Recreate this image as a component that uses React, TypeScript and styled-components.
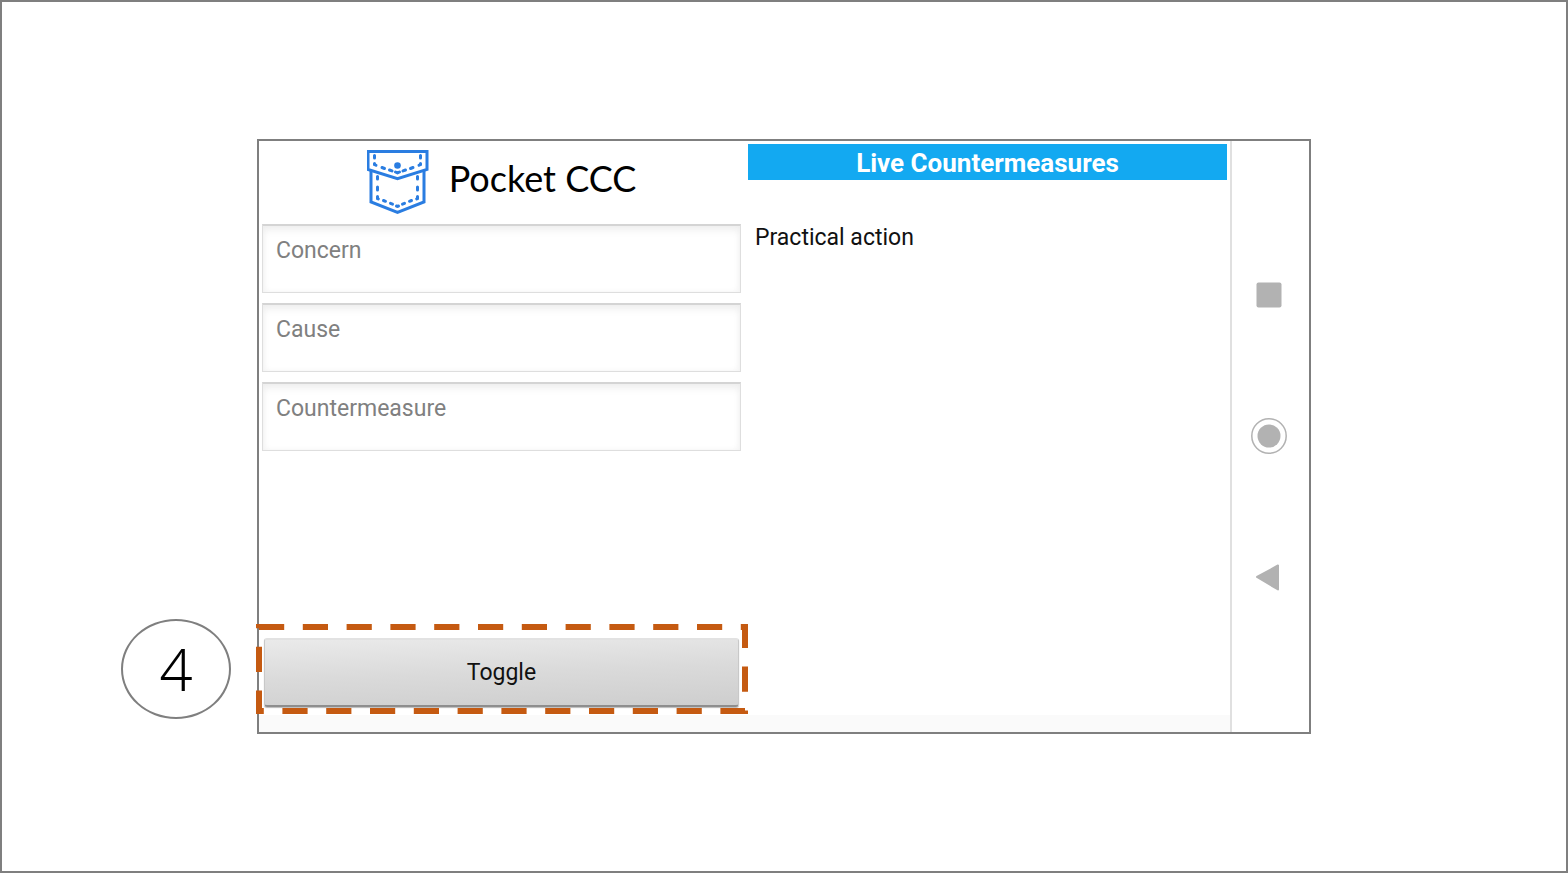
import React from 'react';
import styled, { createGlobalStyle } from 'styled-components';

const GlobalStyle = createGlobalStyle`
  * { box-sizing: border-box; }
  body { margin: 0; background: #fff; font-family: Roboto, sans-serif; }
`;

const Slide = styled.main`
  display: flex;
  align-items: center;
  justify-content: center;
  min-height: 100vh;
  padding: 24px;
  border: 2px solid #7f7f7f;
`;

const Device = styled.section`
  display: flex;
  width: 100%;
  max-width: 1054px;
  border: 2px solid #7f7f7f;
  background: #fff;
`;

const AppArea = styled.div`
  flex: 1;
  display: flex;
  flex-direction: column;
`;

const Columns = styled.div`
  display: grid;
  grid-template-columns: 1fr 1fr;
  gap: 7px;
  min-height: 574px;
  padding: 3px;
  background: #fff;
`;

const BottomStrip = styled.div`
  height: 17px;
  background: #fafafa;
`;

const Column = styled.div`
  display: flex;
  flex-direction: column;
`;

const Brand = styled.header`
  display: flex;
  align-items: center;
  justify-content: center;
  gap: 20px;
  height: 80px;
  padding-bottom: 4px;
`;

const BrandName = styled.h1`
  margin: 0;
  padding-bottom: 8px;
  font: 400 36px/44px Lato, sans-serif;
  color: #000;
`;

const Fields = styled.div`
  display: grid;
  gap: 10px;
`;

const Field = styled.textarea`
  display: block;
  width: 100%;
  height: 69px;
  padding: 11px 13px;
  border: 1px solid #dedede;
  border-top: 2px solid #d4d4d4;
  background: #fff;
  box-shadow: inset 0 5px 10px -2px #ececec, inset 0 0 6px #f4f4f4;
  font: 400 23px/28px Roboto, sans-serif;
  color: #111;
  resize: none;
  outline: none;
  overflow: hidden;
  &::placeholder { color: #808080; opacity: 1; }
`;

const ToggleSlot = styled.div`
  position: relative;
  margin-top: auto;
  padding: 0 2px 5px;
`;

const ToggleButton = styled.button`
  display: block;
  width: 100%;
  height: 69px;
  border: 1px solid #c8c8c8;
  border-top: 2px solid #e2e2e2;
  border-bottom: 2px solid #8e8e8e;
  border-radius: 3px;
  background: linear-gradient(178deg, #eaeaea, #dadada 50%, #cecece);
  box-shadow: 0 1px 1px #bbb;
  font: 400 23px/28px Roboto, sans-serif;
  color: #111;
`;

const Highlight = styled.svg`
  position: absolute;
  top: -14px;
  left: -6px;
  width: calc(100% + 13px);
  height: 90px;
  pointer-events: none;
  rect {
    width: calc(100% - 6px);
    height: calc(100% - 6px);
    fill: none;
    stroke: #c55a11;
    stroke-width: 6px;
  }
`;

const StepMarker = styled.div`
  position: absolute;
  top: -19px;
  left: -141px;
  display: flex;
  align-items: center;
  justify-content: center;
  width: 110px;
  height: 100px;
  border: 2px solid #7f7f7f;
  border-radius: 50%;
  background: #fff;
  font: 350 58px/80px 'Noto Sans', 'Open Sans', sans-serif;
  color: #000;
`;

const PanelTitle = styled.h2`
  margin: 0;
  padding: 3px 0 1px;
  background: #13a9f1;
  font: 700 26px/32px Roboto, sans-serif;
  text-align: center;
  color: #fff;
`;

const Countermeasure = styled.p`
  margin: 0;
  padding: 44px 7px;
  font: 400 23px/28px Roboto, sans-serif;
  color: #111;
`;

const NavBar = styled.nav`
  display: flex;
  flex-direction: column;
  align-items: center;
  justify-content: center;
  gap: 105px;
  width: 79px;
  padding: 0 3px 1px 0;
  border-left: 2px solid #e0e0e0;
`;

const NavButton = styled.button`
  width: 36px;
  height: 36px;
  padding: 0;
  border: 0;
  background: none;
  svg { display: block; }
`;

const PocketLogo = () => (
  <svg width="62" height="66" viewBox="0 0 62 66" fill="none" stroke="#2a7de1" strokeWidth="3" aria-hidden="true">
    <path d="M1 2.500h59v18L30.500 29.700 1 20.500z" />
    <path d="M4 21.500v31.500L30.500 63.500l26.500-10.500V21.500" />
    <g strokeLinecap="round">
      <path d="M7.500 6.500v2.500M7.500 14.500v1l1.500 .8M53.500 6.500v2.500M53.500 14.500v1l-1.500 .8" />
      <path d="M15 18.500l2.500 1M22.500 21l2.500 .9M28.500 23l2 .9 2-.9M46 18.500l-2.500 1M38.500 21l-2.500 .9" />
      <path d="M10.500 27.500v2.500M10.500 38v3M10.500 47.500v2l.8 .4M50.500 27.500v2.500M50.500 38v3M50.500 47.500v2l-.8 .4" />
      <path d="M16.500 51.500l2 .8M23.500 54.300l2 .8M29.500 57l1 .4 1-.4M44.500 51.500l-2 .8M37.500 54.300l-2 .8" />
    </g>
    <circle cx="30.500" cy="16.500" r="3.300" fill="#2a7de1" stroke="none" />
  </svg>
);

export default function App() {
  return (
    <>
      <GlobalStyle />
      <Slide>
        <Device>
          <AppArea>
            <Columns>
              <Column>
                <Brand>
                  <PocketLogo />
                  <BrandName>Pocket CCC</BrandName>
                </Brand>
                <Fields>
                  <Field aria-label="Concern" placeholder="Concern" />
                  <Field aria-label="Cause" placeholder="Cause" />
                  <Field aria-label="Countermeasure" placeholder="Countermeasure" />
                </Fields>
                <ToggleSlot>
                  <ToggleButton type="button">Toggle</ToggleButton>
                  <Highlight aria-hidden="true">
                    <rect x="3" y="3" strokeDasharray="25.2 18.6" />
                  </Highlight>
                  <StepMarker>4</StepMarker>
                </ToggleSlot>
              </Column>
              <Column>
                <PanelTitle>Live Countermeasures</PanelTitle>
                <Countermeasure>Practical action</Countermeasure>
              </Column>
            </Columns>
            <BottomStrip />
          </AppArea>
          <NavBar aria-label="System">
            <NavButton type="button" aria-label="Recent apps">
              <svg width="36" height="36" viewBox="0 0 36 36">
                <rect x="5.500" y="5.500" width="25" height="25" rx="2" fill="#b2b2b2" />
              </svg>
            </NavButton>
            <NavButton type="button" aria-label="Home">
              <svg width="36" height="36" viewBox="0 0 36 36">
                <circle cx="18" cy="18" r="17.200" fill="none" stroke="#b2b2b2" strokeWidth="1.500" />
                <circle cx="18" cy="18" r="11.500" fill="#b2b2b2" />
              </svg>
            </NavButton>
            <NavButton type="button" aria-label="Back">
              <svg width="36" height="36" viewBox="0 0 36 36">
                <path d="M6 18L27 6.500v24z" fill="#b2b2b2" stroke="#b2b2b2" strokeWidth="2" strokeLinejoin="round" />
              </svg>
            </NavButton>
          </NavBar>
        </Device>
      </Slide>
    </>
  );
}
